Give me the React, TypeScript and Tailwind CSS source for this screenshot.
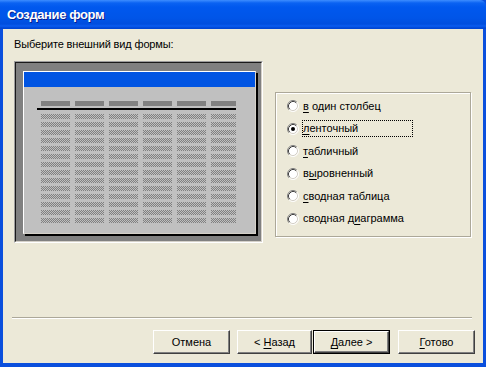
const cols = [29, 29, 29, 29, 29, 25];
const rows = Array.from({ length: 14 }, (_, i) => i);

const options = [
  { pre: "", key: "в", post: " один столбец" },
  { pre: "", key: "л", post: "енточный", checked: true },
  { pre: "", key: "т", post: "абличный" },
  { pre: "в", key: "ы", post: "ровненный" },
  { pre: "", key: "с", post: "водная таблица" },
  { pre: "сводная д", key: "и", post: "аграмма" },
];

const Radio = ({ checked }: { checked?: boolean }) => (
  <svg width="12" height="12" viewBox="0 0 12 12" className="shrink-0">
    <circle cx="6" cy="6" r="5" fill="#fff" />
    <path d="M2.11 9.89 A5.5 5.5 0 0 1 9.89 2.11" fill="none" stroke="#808080" strokeWidth="1" />
    <path d="M2.82 9.18 A4.5 4.5 0 0 1 9.18 2.82" fill="none" stroke="#404040" strokeWidth="1" />
    <path d="M9.89 2.11 A5.5 5.5 0 0 1 2.11 9.89" fill="none" stroke="#fff" strokeWidth="1" />
    <path d="M9.18 2.82 A4.5 4.5 0 0 1 2.82 9.18" fill="none" stroke="#d4d0c8" strokeWidth="1" />
    {checked && <circle cx="6" cy="6" r="2" fill="#000" />}
  </svg>
);

// dithered data rows of the little form preview
const DataRows = () => (
  <svg width="195" height="109" className="block" shapeRendering="crispEdges">
    <defs>
      <pattern id="chk" width="2" height="2" patternUnits="userSpaceOnUse">
        <rect width="2" height="2" fill="#c0c0c0" />
        <rect x="0" y="0" width="1" height="1" fill="#808080" />
        <rect x="1" y="1" width="1" height="1" fill="#808080" />
      </pattern>
    </defs>
    {rows.map((r) =>
      cols.map((w, i) => (
        <rect key={`${r}-${i}`} x={i * 34} y={r * 8} width={w} height={5} fill="url(#chk)" />
      ))
    )}
  </svg>
);

const Button = ({ children, width, isDefault }: { children: React.ReactNode; width: string; isDefault?: boolean }) => (
  <div className={`${width} h-[24px] ${isDefault ? "border border-black" : ""}`}>
    <div className="w-full h-full flex items-center justify-center bg-[#ece9d8] border border-t-white border-l-white border-r-[#404040] border-b-[#404040] shadow-[inset_-1px_-1px_0_#808080]">
      <span>{children}</span>
    </div>
  </div>
);

export default function App() {
  return (
    <div
      className="w-[486px] h-[367px] flex flex-col bg-[#0a4fdd] text-[11px] text-black"
      style={{ fontFamily: '"Liberation Sans", Arial, sans-serif' }}
    >
      {/* title bar */}
      <div className="h-[29px] shrink-0 flex items-center pl-[7px] bg-[linear-gradient(to_bottom,#3d8dff_0px,#0a62f2_3px,#0058ee_7px,#0055e8_18px,#004ede_24px,#0a5cf0_26px,#0046d4_28px)] rounded-tr-[6px]">
        <span className="text-white font-bold text-[13px] tracking-[-0.4px] [text-shadow:1px_1px_0_#0a1e8c]">
          Создание форм
        </span>
      </div>

      {/* body */}
      <div className="flex-1 flex flex-col bg-[#ece9d8] ml-[3px] mr-[3px] mb-[4px]">
        <div className="pl-[11px] pt-[9px] h-[22px] leading-[13px] tracking-[-0.15px]">
          Выберите внешний вид формы:
        </div>

        <div className="flex ml-[11px] mt-[10px]">
          {/* preview */}
          <div className="w-[249px] h-[182px] border border-t-[#9d9d9d] border-l-[#9d9d9d] border-r-white border-b-white">
            <div className="w-full h-full border border-t-[#1a1a1a] border-l-[#1a1a1a] border-r-[#d4d0c8] border-b-[#d4d0c8] bg-[#808080] pl-[7px] pt-[8px]">
              <div className="w-[233px] h-[163px] bg-[#c0c0c0] border border-t-white border-l-white border-r-[#d4d0c8] border-b-[#d4d0c8] shadow-[2px_2px_0_#000]">
                <div className="h-[15px] bg-[#0054e3]" />
                <div className="pl-[13px] pt-[14px]">
                  <div className="flex gap-[5px] pl-[4px]">
                    {cols.map((w, i) => (
                      <div key={i} className="h-[5px] bg-[#808080]" style={{ width: w }} />
                    ))}
                  </div>
                  <div className="w-[199px] h-[2px] bg-black mt-[2px]" />
                  <div className="pl-[4px] mt-[4px]">
                    <DataRows />
                  </div>
                </div>
              </div>
            </div>
          </div>

          {/* options */}
          <div className="ml-[12px] mt-[31px] w-[196px] h-[145px] border border-[#aca899] shadow-[inset_1px_1px_0_#fff,1px_1px_0_#fff] pl-[11px] pt-[4px] flex flex-col gap-[4.5px]">
            {options.map((o, i) => (
              <div key={i} className="h-[18px] flex items-center">
                <Radio checked={o.checked} />
                <div
                  className={`ml-[3px] h-[17px] flex items-center pl-[1px] ${
                    o.checked ? "w-[111px] outline outline-1 outline-dotted outline-black -outline-offset-1" : ""
                  }`}
                >
                  <span className="whitespace-pre">
                    {o.pre}
                    <span className="underline underline-offset-2">{o.key}</span>
                    {o.post}
                  </span>
                </div>
              </div>
            ))}
          </div>
        </div>

        {/* separator */}
        <div className="mt-[74px] ml-[9px] mr-[11px] h-[2px] border-t border-t-[#aca899] border-b border-b-white" />

        {/* buttons */}
        <div className="flex mt-[11px] ml-[150px]">
          <Button width="w-[77px]">Отмена</Button>
          <div className="ml-[7px]">
            <Button width="w-[75px]">
              &lt; <span className="underline underline-offset-2">Н</span>азад
            </Button>
          </div>
          <div className="ml-[1px]">
            <Button width="w-[77px]" isDefault>
              <span className="underline underline-offset-2">Д</span>алее &gt;
            </Button>
          </div>
          <div className="ml-[8px]">
            <Button width="w-[77px]">
              <span className="underline underline-offset-2">Г</span>отово
            </Button>
          </div>
        </div>
      </div>
    </div>
  );
}
